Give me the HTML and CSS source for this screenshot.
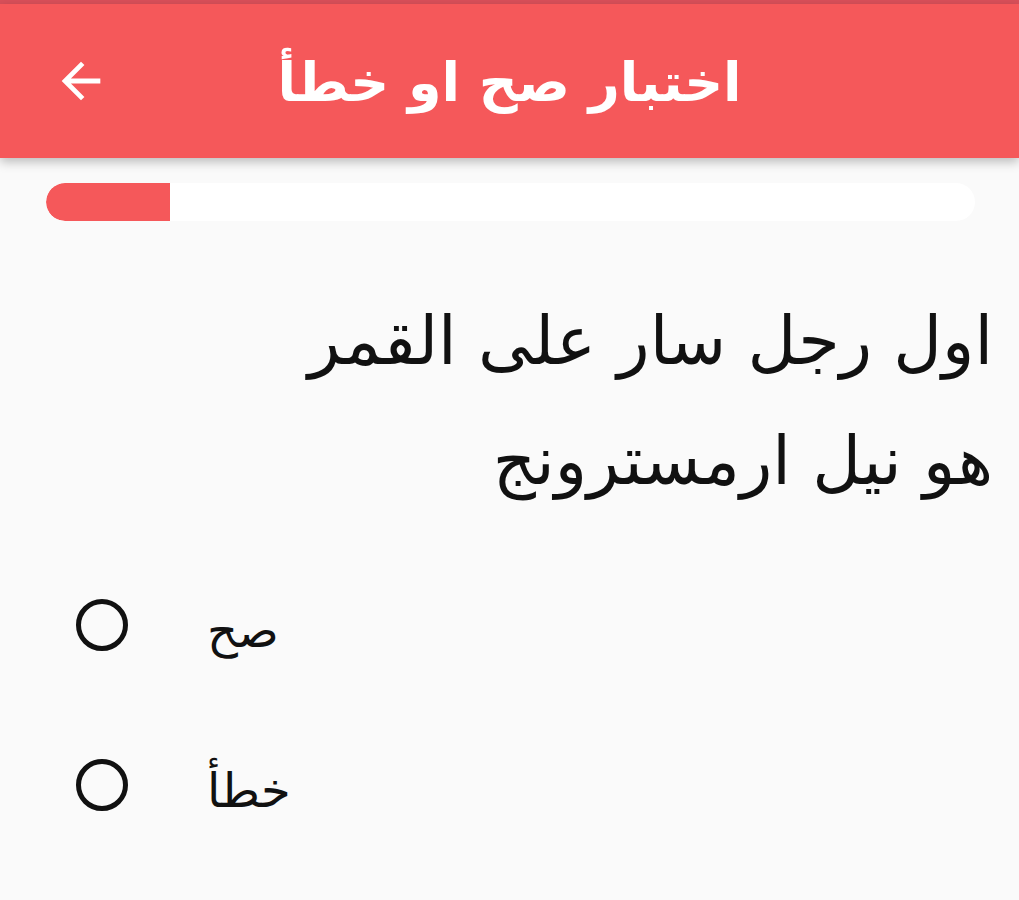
FILE: index.html
```html
<!DOCTYPE html>
<html lang="ar">
<head>
<meta charset="utf-8">
<link rel="stylesheet" href="styles.css">
</head>
<body>
<div class="status"></div>
<header class="appbar">
  <button class="back" aria-label="رجوع">
    <svg width="58" height="58" viewBox="0 0 24 24"><path d="M20 11H7.83l5.59-5.59L12 4l-8 8 8 8 1.41-1.41L7.83 13H20v-2z" fill="#fff"/></svg>
  </button>
  <h1 class="title">اختبار صح او خطأ</h1>
</header>
<main class="content">
  <div class="progress"><div class="fill" style="width:13.4%"></div></div>
  <p class="question" dir="rtl">اول رجل سار على القمر<br>هو نيل ارمسترونج</p>
  <div class="options">
    <label class="option"><span class="radio"></span><span class="opt-text">صح</span></label>
    <label class="option"><span class="radio"></span><span class="opt-text">خطأ</span></label>
  </div>
</main>
</body>
</html>
```
FILE: styles.css
```css
html, body {
  margin: 0;
  padding: 0;
  background: #fafafa;
  font-family: "DejaVu Sans", "Noto Sans", sans-serif;
  width: 1019px;
  height: 900px;
  overflow: hidden;
}
.status {
  height: 4px;
  background: #d9505a;
}
.appbar {
  height: 154px;
  background: #f5585a;
  position: relative;
  display: flex;
  align-items: center;
  justify-content: center;
  box-shadow: 0 4px 10px rgba(0,0,0,0.25);
  z-index: 1;
}
.back {
  position: absolute;
  left: 52px;
  top: 48px;
  background: none;
  border: 0;
  padding: 0;
  width: 58px;
  height: 58px;
}
.title {
  margin: 0;
  color: #fff;
  font-size: 54px;
  font-weight: bold;
  line-height: 1;
  padding-top: 4px;
}
.content {
  padding: 25px 44px 0 46px;
}
.progress {
  height: 38px;
  background: #ffffff;
  border-radius: 19px;
  overflow: hidden;
}
.fill {
  height: 100%;
  background: #f5585a;
  border-radius: 19px 0 0 19px;
}
.question {
  margin: 60px -18px 0 0;
  font-size: 67px;
  line-height: 120px;
  color: #111;
  text-align: right;
}
.options {
  margin-top: 79px;
  display: flex;
  flex-direction: column;
  gap: 110px;
}
.option {
  display: flex;
  align-items: center;
  gap: 79px;
  height: 50px;
  padding-left: 30px;
}
.radio {
  width: 42px;
  height: 42px;
  border: 5px solid #111;
  border-radius: 50%;
  flex: none;
}
.opt-text {
  font-size: 48px;
  color: #111;
  padding-top: 10px;
}
```
